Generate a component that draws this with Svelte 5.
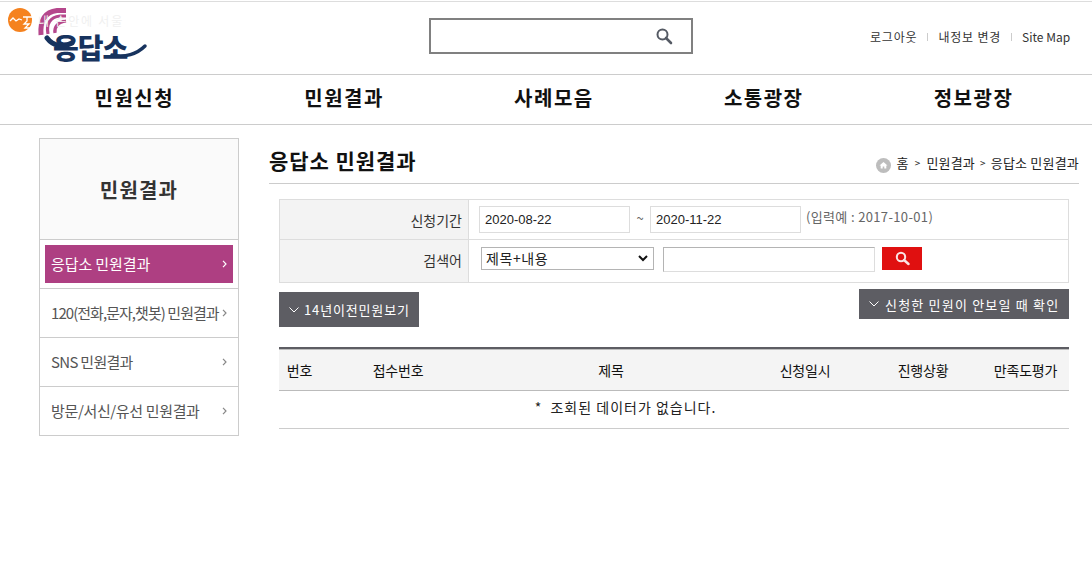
<script lang="ts">
  const navItems = ['민원신청', '민원결과', '사례모음', '소통광장', '정보광장'];
  const sideItems = [
    { label: '응답소 민원결과', track: -0.1 },
    { label: '120(전화,문자,챗봇) 민원결과', track: -0.95 },
    { label: 'SNS 민원결과', track: -0.7 },
    { label: '방문/서신/유선 민원결과', track: -0.35 },
  ];
  const columns = ['번호', '접수번호', '제목', '신청일시', '진행상황', '만족도평가'];
</script>

<div class="page">
  <header class="top">
    <a class="logo" href="#top">
      <svg width="150" height="66" viewBox="0 2 150 66">
        <circle cx="20" cy="20" r="12" fill="#f5821f" />
        <path d="M10 21l3-3 3 3 3-2 3 1M23 17h9M27 17v4l-3 3h5l-4 4h5" fill="none" stroke="#fff" stroke-width="1.300" />
        <path d="M41 35C40 22 44 12 57 10.500l9 0" fill="none" stroke="#b5478c" stroke-width="5" />
        <path d="M48 34C46 24 50 17 60 16l6 0M55 33c-1-6 3-11 11-12" fill="none" stroke="#b5478c" stroke-width="3.200" />
        <path d="M47 38C53 46 63 48 72 43" fill="none" stroke="#17335e" stroke-width="5" stroke-linecap="round" />
        <path d="M112 55C125 58 137 54 145 46" fill="none" stroke="#17335e" stroke-width="3.500" stroke-linecap="round" />
      </svg>
      <span class="logo-faded">내 손안에 서울</span>
      <span class="logo-word">응답소</span>
    </a>
    <div class="search">
      <svg width="18" height="18" viewBox="0 0 18 18">
        <circle cx="7.500" cy="7.500" r="5" fill="none" stroke="#555a64" stroke-width="2" />
        <path d="M11 11l5 5" stroke="#555a64" stroke-width="2.600" stroke-linecap="round" />
      </svg>
    </div>
    <nav class="util">
      <span>로그아웃</span><i></i><span>내정보 변경</span><i></i><span class="latin">Site Map</span>
    </nav>
  </header>

  <nav class="gnb">
    {#each navItems as item}
      <span>{item}</span>
    {/each}
  </nav>

  <div class="body">
    <aside class="side">
      <h2>민원결과</h2>
      <ul>
        {#each sideItems as item, i}
          <li class:active={i === 0}>
            <span class="side-link"><span class="side-label" style="letter-spacing: {item.track}px">{item.label}</span>
              <svg width="5" height="8" viewBox="0 0 5 8"><path d="M1 .8L4 4 1 7.200" fill="none" stroke="currentColor" stroke-width="1.200" /></svg>
            </span>
          </li>
        {/each}
      </ul>
    </aside>

    <main class="content">
      <div class="title-row">
        <h1>응답소 민원결과</h1>
        <div class="crumb">
          <svg width="15" height="15" viewBox="0 0 15 15">
            <circle cx="7.500" cy="7.500" r="7.500" fill="#bdbdbd" />
            <path d="M3.500 7.500l4-3.500 4 3.500h-1.200v3H8.300V8.500H6.700v2H4.700v-3z" fill="#fff" />
          </svg>
          <span>홈</span><small>&gt;</small><span>민원결과</span><small class="tight">&gt;</small><span>응답소 민원결과</span>
        </div>
      </div>

      <div class="inner">
        <div class="form">
          <div class="th first">신청기간</div>
          <div class="td first">
            <div class="date">2020-08-22</div>
            <span class="tilde">~</span>
            <div class="date">2020-11-22</div>
            <span class="hint">(입력예 : 2017-10-01)</span>
          </div>
          <div class="th">검색어</div>
          <div class="td second">
            <div class="select">
              <span>제목+내용</span>
              <svg width="10" height="7" viewBox="0 0 10 7"><path d="M1 1l4 4 4-4" fill="none" stroke="#111" stroke-width="2" /></svg>
            </div>
            <div class="keyword"></div>
            <div class="red-btn">
              <svg width="15" height="15" viewBox="0 0 15 15">
                <circle cx="6" cy="6" r="4.200" fill="none" stroke="#fbe3e3" stroke-width="2" />
                <path d="M9 9l4.500 4" stroke="#fbe3e3" stroke-width="2.400" stroke-linecap="round" />
              </svg>
            </div>
          </div>
        </div>

        <div class="btn-row">
          <div class="dark-btn old">
            <svg width="10" height="6" viewBox="0 0 10 6"><path d="M.5.5L5 5 9.500.5" fill="none" stroke="#fff" /></svg>
            <span>14년이전민원보기</span>
          </div>
          <div class="dark-btn check">
            <svg width="10" height="6" viewBox="0 0 10 6"><path d="M.5.5L5 5 9.500.5" fill="none" stroke="#fff" /></svg>
            <span>신청한 민원이 안보일 때 확인</span>
          </div>
        </div>

        <div class="table">
          <div class="head">
            {#each columns as col}
              <span>{col}</span>
            {/each}
          </div>
          <div class="empty">*&nbsp; 조회된 데이터가 없습니다.</div>
        </div>
      </div>
    </main>
  </div>
</div>

<style>
  :global(body) {
    margin: 0;
    background: #fff;
  }
  .page {
    width: 1092px;
    height: 582px;
    overflow: hidden;
    font-family: 'Noto Sans CJK KR', 'Noto Sans', sans-serif;
    color: #222;
  }
  .top {
    position: relative;
    height: 72px;
    border-top: 1px solid #ddd;
    border-bottom: 1px solid #ccc;
    margin-top: 1px;
    display: flex;
    align-items: flex-start;
  }
  .logo {
    position: relative;
    display: block;
    width: 150px;
    height: 66px;
    color: inherit;
    text-decoration: none;
  }
  .logo-faded {
    position: absolute;
    left: 38px;
    top: 11px;
    font-size: 12px;
    line-height: 16px;
    letter-spacing: 1.800px;
    color: #f0f0f0;
    white-space: nowrap;
  }
  .logo-word {
    position: absolute;
    left: 53px;
    top: 29px;
    font-size: 28px;
    line-height: 32px;
    font-weight: 900;
    letter-spacing: -1px;
    color: #17335e;
    white-space: nowrap;
  }
  .search {
    box-sizing: border-box;
    width: 264px;
    height: 36px;
    margin: 16px 0 0 279px;
    border: 2px solid #808080;
    display: flex;
    align-items: center;
    justify-content: flex-end;
    padding-right: 18px;
  }
  .util {
    margin: 26px 0 0 177px;
    display: flex;
    align-items: center;
    font-size: 12px;
    line-height: 18px;
    letter-spacing: .8px;
    white-space: nowrap;
    color: #333;
  }
  .util i {
    width: 1px;
    height: 8px;
    background: #ccc;
    margin: 0 10px;
  }
  .util .latin {
    letter-spacing: 0;
  }
  .gnb {
    height: 49px;
    border-bottom: 1px solid #ccc;
    display: flex;
    padding-left: 94.500px;
  }
  .gnb span {
    flex: none;
    width: 209.800px;
    font-size: 20px;
    font-weight: 700;
    line-height: 45px;
    letter-spacing: 1.500px;
    color: #111;
  }
  .body {
    display: flex;
    padding: 13px 0 0 39px;
  }
  .side {
    box-sizing: border-box;
    width: 200px;
    height: 298px;
    border: 1px solid #ccc;
  }
  .side h2 {
    margin: 0;
    height: 100px;
    background: #fafafa;
    border-bottom: 1px solid #ccc;
    text-align: center;
    font-size: 20px;
    font-weight: 700;
    line-height: 101px;
    letter-spacing: 1.200px;
    color: #333;
  }
  .side ul {
    margin: 0;
    padding: 0;
    list-style: none;
  }
  .side li {
    box-sizing: border-box;
    height: 49px;
    padding: 5px;
    border-bottom: 1px solid #ccc;
    font-size: 15px;
    color: #555;
  }
  .side li:last-child {
    border-bottom: 0;
  }
  .side-link {
    height: 38px;
    padding: 0 6px;
    display: flex;
    align-items: center;
    justify-content: space-between;
    white-space: nowrap;
  }
  .side-label {
    padding-bottom: 2px;
  }
  .side-link svg {
    flex: none;
    color: #888;
  }
  .side li.active .side-link {
    background: #ae3f82;
    color: #fff;
  }
  .side li.active svg {
    color: #fff;
  }
  .content {
    width: 810px;
    margin-left: 30px;
  }
  .title-row {
    height: 45px;
    border-bottom: 1px solid #ccc;
    display: flex;
    justify-content: space-between;
    align-items: center;
  }
  .title-row h1 {
    margin: 0 0 2px;
    font-size: 21px;
    line-height: 28px;
    font-weight: 700;
    letter-spacing: .95px;
    color: #111;
  }
  .crumb {
    display: flex;
    align-items: center;
    gap: 5px;
    margin-top: 4px;
    font-size: 13px;
    line-height: 18px;
    letter-spacing: .2px;
    color: #222;
  }
  .crumb svg {
    margin-top: 5px;
  }
  .crumb small {
    font-size: 10px;
    margin: 0 1px;
  }
  .crumb small.tight {
    margin: 0;
  }
  .inner {
    margin: 15px 10px 0;
  }
  .form {
    display: grid;
    grid-template-columns: 189px 1fr;
    grid-template-rows: 40px 42px;
    border: 1px solid #ddd;
    font-size: 14px;
  }
  .th {
    background: #f3f3f3;
    border-right: 1px solid #ddd;
    text-align: right;
    padding-right: 6px;
    line-height: 41px;
    color: #333;
  }
  .th.first,
  .td.first {
    border-bottom: 1px solid #ddd;
  }
  .td {
    display: flex;
    align-items: center;
    font-size: 13px;
  }
  .td.first {
    padding-left: 10px;
  }
  .date {
    box-sizing: border-box;
    width: 151px;
    height: 27px;
    border: 1px solid #ddd;
    padding-left: 5px;
    font-family: 'Liberation Sans', sans-serif;
    font-size: 13px;
    line-height: 25px;
    color: #222;
  }
  .tilde {
    width: 20px;
    margin-top: -4px;
    text-align: center;
    font-size: 13px;
    color: #666;
  }
  .hint {
    margin-left: 5px;
    margin-top: -6px;
    font-size: 13px;
    color: #666;
    letter-spacing: .35px;
  }
  .td.second {
    padding: 7px 0 0 12px;
    align-items: flex-start;
  }
  .select {
    box-sizing: border-box;
    width: 173px;
    height: 23px;
    border: 1px solid #b4b4b4;
    padding: 0 5px 0 4px;
    display: flex;
    align-items: center;
    justify-content: space-between;
    font-size: 14px;
    letter-spacing: .6px;
    color: #222;
  }
  .select span {
    padding-bottom: 2px;
  }
  .keyword {
    box-sizing: border-box;
    width: 212px;
    height: 25px;
    margin-left: 9px;
    border: 1px solid #ddd;
    border-top-color: #b4b4b4;
    border-left-color: #b4b4b4;
  }
  .red-btn {
    width: 40px;
    height: 23px;
    margin-left: 7px;
    background: #e01010;
    display: flex;
    align-items: center;
    justify-content: center;
  }
  .btn-row {
    display: flex;
    justify-content: space-between;
    align-items: flex-start;
    margin-top: 6px;
  }
  .dark-btn {
    background: #5d5d63;
    color: #fff;
    display: flex;
    align-items: center;
    gap: 6px;
    font-size: 13px;
    padding: 0 10px;
    white-space: nowrap;
  }
  .dark-btn svg {
    flex: none;
  }
  .dark-btn.old {
    height: 35px;
    width: 120px;
    margin-top: 3px;
    gap: 5px;
    letter-spacing: .85px;
  }
  .dark-btn.check {
    height: 30px;
    width: 190px;
    letter-spacing: 1.200px;
  }
  .table {
    margin-top: 20px;
  }
  .head {
    display: grid;
    grid-template-columns: 41px 156px 270px 118px 118px 87px;
    align-items: center;
    box-sizing: border-box;
    height: 44px;
    border-top: 2px solid #5d5d63;
    border-bottom: 1px solid #bbb;
    box-shadow: inset 0 1px 0 #bdbdbd;
    background: #f4f4f4;
    font-size: 14px;
    letter-spacing: -.2px;
    color: #111;
  }
  .head span {
    text-align: center;
  }
  .empty {
    height: 37px;
    border-bottom: 1px solid #ccc;
    text-align: center;
    font-size: 14px;
    line-height: 32px;
    letter-spacing: 1px;
    color: #222;
    padding-right: 97px;
  }
</style>
